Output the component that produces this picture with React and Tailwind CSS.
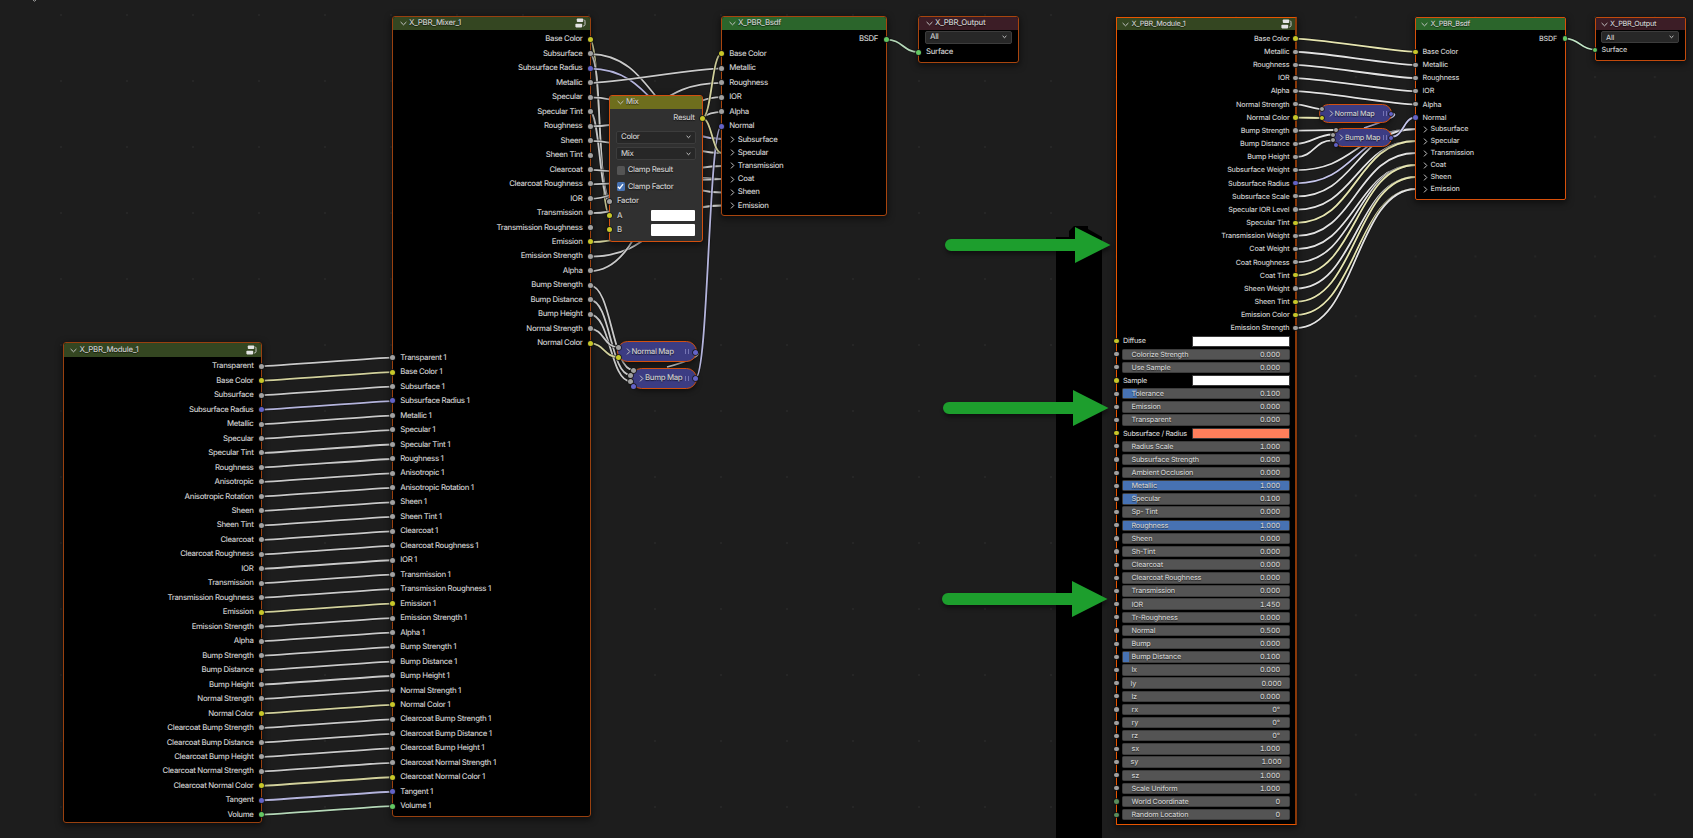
import React from "react";

const SOCKET = { g: "bg-[#a1a1a1]", y: "bg-[#c7c729]", p: "bg-[#6363c7]", s: "bg-[#63c763]", i: "bg-[#598c5c]" };
const WIRE = { g: "#c9c9c9", y: "#d2d19c", p: "#b4b4dc", s: "#b5d8b8" };
const WIRE_HI = { g: "#e3e3e3", y: "#e6e5b0", p: "#c6c6ec", s: "#c4e8c8" };

const moduleOutputs = [
  ["Transparent"], ["Base Color", "y"], ["Subsurface"], ["Subsurface Radius", "p"], ["Metallic"], ["Specular"],
  ["Specular Tint"], ["Roughness"], ["Anisotropic"], ["Anisotropic Rotation"], ["Sheen"], ["Sheen Tint"],
  ["Clearcoat"], ["Clearcoat Roughness"], ["IOR"], ["Transmission"], ["Transmission Roughness"], ["Emission", "y"],
  ["Emission Strength"], ["Alpha"], ["Bump Strength"], ["Bump Distance"], ["Bump Height"], ["Normal Strength"],
  ["Normal Color", "y"], ["Clearcoat Bump Strength"], ["Clearcoat Bump Distance"], ["Clearcoat Bump Height"],
  ["Clearcoat Normal Strength"], ["Clearcoat Normal Color", "y"], ["Tangent", "p"], ["Volume", "s"],
];

const mixerOutputs = [
  ["Base Color", "y"], ["Subsurface"], ["Subsurface Radius", "p"], ["Metallic"], ["Specular"], ["Specular Tint"],
  ["Roughness"], ["Sheen"], ["Sheen Tint"], ["Clearcoat"], ["Clearcoat Roughness"], ["IOR"], ["Transmission"],
  ["Transmission Roughness"], ["Emission", "y"], ["Emission Strength"], ["Alpha"], ["Bump Strength"],
  ["Bump Distance"], ["Bump Height"], ["Normal Strength"], ["Normal Color", "y"],
];

const bsdfInputs = [["Base Color", "y"], ["Metallic"], ["Roughness"], ["IOR"], ["Alpha"], ["Normal", "p"]];
const bsdfPanels = ["Subsurface", "Specular", "Transmission", "Coat", "Sheen", "Emission"];

const newOutputs = [
  ["Base Color", "y"], ["Metallic"], ["Roughness"], ["IOR"], ["Alpha"], ["Normal Strength"], ["Normal Color", "y"],
  ["Bump Strength"], ["Bump Distance"], ["Bump Height"], ["Subsurface Weight"], ["Subsurface Radius", "p"],
  ["Subsurface Scale"], ["Specular IOR Level"], ["Specular Tint", "y"], ["Transmission Weight"], ["Coat Weight"],
  ["Coat Roughness"], ["Coat Tint", "y"], ["Sheen Weight"], ["Sheen Tint", "y"], ["Emission Color", "y"],
  ["Emission Strength"],
];

const fields = [
  { n: "Diffuse", swatch: "bg-white" }, { n: "Colorize Strength", v: "0.000" }, { n: "Use Sample", v: "0.000" },
  { n: "Sample", swatch: "bg-white" }, { n: "Tolerance", v: "0.100", fill: 8.5 }, { n: "Emission", v: "0.000" },
  { n: "Transparent", v: "0.000" }, { n: "Subsurface / Radius", swatch: "bg-[#ff7f5b]" },
  { n: "Radius Scale", v: "1.000" }, { n: "Subsurface Strength", v: "0.000" }, { n: "Ambient Occlusion", v: "0.000" },
  { n: "Metallic", v: "1.000", fill: 100 }, { n: "Specular", v: "0.100", fill: 8.5 }, { n: "Sp- Tint", v: "0.000" },
  { n: "Roughness", v: "1.000", fill: 100 }, { n: "Sheen", v: "0.000" }, { n: "Sh-Tint", v: "0.000" },
  { n: "Clearcoat", v: "0.000" }, { n: "Clearcoat Roughness", v: "0.000" }, { n: "Transmission", v: "0.000" },
  { n: "IOR", v: "1.450" }, { n: "Tr-Roughness", v: "0.000" }, { n: "Normal", v: "0.500" }, { n: "Bump", v: "0.000" },
  { n: "Bump Distance", v: "0.100", fill: 3.8 }, { n: "lx", v: "0.000" }, { n: "ly", v: "0.000", wide: true },
  { n: "lz", v: "0.000" }, { n: "rx", v: "0°" }, { n: "ry", v: "0°" }, { n: "rz", v: "0°" }, { n: "sx", v: "1.000" },
  { n: "sy", v: "1.000", wide: true }, { n: "sz", v: "1.000" }, { n: "Scale Uniform", v: "1.000" },
  { n: "World Coordinate", v: "0", c: "i" }, { n: "Random Location", v: "0", c: "i" },
];

function curve(x1, y1, x2, y2) {
  const dx = Math.abs(x2 - x1);
  const slope = dx ? Math.abs(y2 - y1) / dx : 1;
  const h = dx * 0.5 * Math.min(1, slope * 3.25);
  return `M${x1} ${y1}C${x1 + h} ${y1} ${x2 - h} ${y2} ${x2} ${y2}`;
}

const P = 14.468;
const mixY = (i) => 39.6 + P * i;
const leftWires = [
  ...moduleOutputs.map(([, c], i) => [curve(261, 366.2 + P * i, 392.5, 357.7 + P * i), c || "g"]),
  [curve(590, mixY(0), 609.5, 215.5), "y"],
  ["M590 54C603 60 596 180 609.5 201", "g"],
  [curve(590, mixY(5), 609.5, 201.3), "g"],
  [curve(590, mixY(1), 722, 139), "g"],
  [curve(590, mixY(2), 722, 139), "p"],
  [curve(590, mixY(3), 721.5, 68.4), "g"],
  [curve(590, mixY(4), 722, 153), "g"],
  [curve(590, mixY(6), 721.5, 82.8), "g"],
  [curve(590, mixY(7), 722, 192.5), "g"],
  [curve(590, mixY(9), 722, 179), "g"],
  [curve(590, mixY(10), 722, 179), "g"],
  [curve(590, mixY(11), 721.5, 97.2), "g"],
  [curve(590, mixY(12), 722, 166), "g"],
  [curve(590, mixY(14), 722, 205.5), "y"],
  [curve(590, mixY(15), 722, 205.5), "g"],
  [curve(590, mixY(16), 721.5, 111.8), "g"],
  [curve(590, mixY(17), 633.3, 370), "g"],
  [curve(590, mixY(18), 630.5, 375), "g"],
  [curve(590, mixY(19), 630.5, 381.3), "g"],
  [curve(590, mixY(20), 618, 347.2), "g"],
  [curve(590, mixY(21), 618, 357), "y"],
  ["M695 352C704 354 690 361 667 367", "g"],
  [curve(695.5, 378, 721.5, 126.2), "p"],
  [curve(702, 118.2, 721.5, 53.8), "y"],
  [curve(702, 118.2, 722, 153), "y"],
  [curve(886.3, 39.6, 919, 52), "s"],
];

const Q = 13.156;
const newY = (i) => 38.6 + Q * i;
const rightWires = [
  [curve(1296, newY(0), 1415.5, newY(1)), "y"],
  ...[1, 2, 3, 4].map((i) => [curve(1296, newY(i), 1415.5, newY(i + 1)), "g"]),
  [curve(1296, newY(5), 1321, 109), "g"],
  [curve(1296, newY(6), 1321, 118), "y"],
  [curve(1296, newY(7), 1335, 130), "g"],
  [curve(1296, newY(8), 1332.5, 134.5), "g"],
  [curve(1296, newY(9), 1332.5, 140.3), "g"],
  [curve(1296, newY(10), 1416, 129), "g"],
  [curve(1296, newY(11), 1416, 129), "p"],
  [curve(1296, newY(12), 1416, 129), "g"],
  [curve(1296, newY(13), 1416, 141), "g"],
  [curve(1296, newY(14), 1416, 141), "y"],
  [curve(1296, newY(15), 1416, 153), "g"],
  [curve(1296, newY(16), 1416, 165), "g"],
  [curve(1296, newY(17), 1416, 165), "g"],
  [curve(1296, newY(18), 1416, 165), "y"],
  [curve(1296, newY(19), 1416, 177), "g"],
  [curve(1296, newY(20), 1416, 177), "y"],
  [curve(1296, newY(21), 1416, 189), "y"],
  [curve(1296, newY(22), 1416, 189), "g"],
  ["M1391.5 113.5C1401 114 1386 121 1364 128", "p"],
  [curve(1391.5, 137, 1415.5, 117.4), "p"],
  [curve(1565.2, 38.6, 1595, 49.6), "s"],
];

function Wires() {
  return (
    <svg className="absolute inset-0" width="1693" height="838" fill="none">
      <defs>
        <pattern id="dotsA" x="919" y="81" width="66" height="66" patternUnits="userSpaceOnUse" patternTransform="translate(-1 -1)">
          <rect width="2" height="2" fill="#262626" />
        </pattern>
        <pattern id="dotsB" x="1595" y="77" width="59.8" height="59.8" patternUnits="userSpaceOnUse" patternTransform="translate(-1 -1)">
          <rect width="2" height="2" fill="#262626" />
        </pattern>
      </defs>
      <rect width="1056" height="838" fill="url(#dotsA)" />
      <rect x="1102" width="591" height="838" fill="url(#dotsB)" />
      <path d="M33 0L34.5 1.2L36 0" stroke="#a0a0a0" strokeWidth="1" />
      <path d="M1056 838V237H1069V231L1074 226H1088V229L1102 237V838Z" fill="#000" />
      {leftWires.map(([d, c], i) => (
        <g key={i}>
          <path d={d} stroke="#0f0f0f" strokeOpacity="0.6" strokeWidth="3.2" />
          <path d={d} stroke={WIRE[c]} strokeWidth="1.8" />
        </g>
      ))}
      {rightWires.map(([d, c], i) => (
        <g key={i}>
          <path d={d} stroke="#0f0f0f" strokeOpacity="0.6" strokeWidth="3.2" />
          <path d={d} stroke={WIRE_HI[c]} strokeWidth="1.8" />
        </g>
      ))}
    </svg>
  );
}

function Arrows() {
  const list = [[945, 1075, 1110.5, 245], [943, 1073, 1108.5, 408], [942, 1072, 1107.5, 599]];
  return (
    <svg className="pointer-events-none absolute inset-0 drop-shadow-[1px_3px_2px_rgba(0,0,0,0.45)]" width="1693" height="838">
      {list.map(([a, b, c, y]) => (
        <path key={y} fill="#1d9e2d" d={`M${a + 6} ${y - 6}H${b}V${y - 18}L${c} ${y}L${b} ${y + 18}V${y + 6}H${a + 6}A6 6 0 0 1 ${a + 6} ${y - 6}Z`} />
      ))}
    </svg>
  );
}

function Dot({ c = "g", className }) {
  return <span className={"absolute rounded-full shadow-[0_0_0_0.7px_#151515] " + SOCKET[c] + " " + className} />;
}

function Chevron({ className = "", right, w = 1 }) {
  return (
    <svg className={"shrink-0 " + className} viewBox="0 0 7 7" width="7" height="7" fill="none" stroke="#c4c4c4" strokeWidth={w}>
      <path d={right ? "M2 0.6L4.8 3.5L2 6.4" : "M0.6 2L3.5 4.8L6.4 2"} />
    </svg>
  );
}

function GroupIcon({ className }) {
  return (
    <svg className={className} width="11" height="10" viewBox="0 0 11 10" fill="none">
      <rect x="1.8" y="0.4" width="6.4" height="3.6" rx="0.8" fill="#e4e4e4" />
      <rect x="0.4" y="5.8" width="6.8" height="3.6" rx="0.8" fill="#e4e4e4" />
      <path d="M8.8 1.8C9.8 2 10 2.6 10 3.4V6.4C10 7.4 9.4 8 8.2 8" stroke="#c9c9c9" strokeWidth="1" />
    </svg>
  );
}

function Node({ box, header, title, group, children, small }) {
  return (
    <section className={"absolute flex flex-col bg-black shadow-[0_2px_6px_1px_rgba(0,0,0,0.5)] " + box}>
      <header className={"flex shrink-0 items-center overflow-hidden " + (small ? "h-[12px] pl-[5px] pr-[3px] " : "h-[13.6px] rounded-t-[2px] pl-[6.5px] pr-[4px] ") + header}>
        <Chevron className="mr-[2.5px]" />
        <span className="grow tracking-[-0.24px]">{title}</span>
        {group && <GroupIcon className="shrink-0" />}
      </header>
      {children}
    </section>
  );
}

function Out({ row, name, c, dot, pad }) {
  return (
    <div className={"relative flex shrink-0 items-center justify-end " + row + " " + pad}>
      {name}
      <Dot c={c} className={dot} />
    </div>
  );
}

function In({ row, name, c, dot, pad }) {
  return (
    <div className={"relative flex shrink-0 items-center " + row + " " + pad}>
      {name}
      <Dot c={c} className={dot} />
    </div>
  );
}

function Select({ label, className }) {
  return (
    <div className={"flex shrink-0 items-center justify-between rounded-[2px] border border-[#3c3c3c] bg-[#272727] " + className}>
      <span>{label}</span>
      <svg width="5" height="4" viewBox="0 0 5 4" fill="none" stroke="#c8c8c8" strokeWidth="1">
        <path d="M0.6 0.9L2.5 2.7L4.4 0.9" />
      </svg>
    </div>
  );
}

const LO = "right-[-2.8px] top-[4.7px] size-[5px]";
const LI = "left-[-2.6px] top-[4.7px] size-[5px]";
const RO = "right-[-2.6px] top-[4.5px] size-[4.2px]";
const RI = "left-[-2.6px] top-[4.5px] size-[4.2px]";

function MapNode({ box, name, dots, pad }) {
  return (
    <div className={"absolute flex items-center rounded-full border border-[#d2500f] bg-[#3c3c83] shadow-[0_2px_5px_rgba(0,0,0,0.5)] " + box + " " + pad}>
      <Chevron right />
      <span className="grow whitespace-nowrap">{name}</span>
      <span className="h-[5px] w-[4px] shrink-0 border-x border-[#7474b4]" />
      {dots.map(([c, cls], i) => <Dot key={i} c={c} className={cls} />)}
    </div>
  );
}

function Field({ f }) {
  return (
    <div className="relative flex h-[13.17px] shrink-0 items-center pl-[5px] pr-[5.5px]">
      <Dot c={f.swatch ? "y" : f.c || "g"} className={RI} />
      {f.swatch ? (
        <>
          <span className="grow pl-[1px] tracking-[-0.28px]">{f.n}</span>
          <span className={"h-[11px] w-[97.5px] rounded-[1px] border border-[#3a3a3a] " + f.swatch} />
        </>
      ) : (
        <div className={"relative flex h-[11.4px] grow items-center justify-between overflow-hidden rounded-[1.5px] border border-[#3d3d3d] bg-[#545454] " + (f.wide ? "pl-[7.5px] pr-[7px]" : "px-[8.5px]")}>
          {f.fill && <span className="absolute inset-y-0 left-0 bg-[#4772b3]" style={{ width: f.fill + "%" }} />}
          <span className="relative">{f.n}</span>
          <span className="relative tabular-nums tracking-[-0.1px]">{f.v}</span>
        </div>
      )}
    </div>
  );
}

export default function App() {
  return (
    <main className="relative h-[838px] w-[1693px] overflow-hidden whitespace-nowrap bg-[#1d1d1d] font-['Inter',sans-serif] text-[7.8px] font-medium leading-none tracking-[-0.33px] text-[#cccccc] [text-rendering:geometricPrecision] [text-shadow:0_1px_1px_rgba(0,0,0,0.6)]">
      <Wires />

      <Node box="left-[62.5px] top-[342.4px] h-[480.4px] w-[199.5px] rounded-[3px] border border-[#98400f]" header="bg-[#344621]" title="X_PBR_Module_1" group>
        <div className="flex flex-col pt-[2px]">
          {moduleOutputs.map(([n, c]) => <Out key={n} row="h-[14.47px]" pad="pr-[7.5px]" name={n} c={c} dot={LO} />)}
        </div>
      </Node>

      <Node box="left-[392px] top-[15.6px] h-[801.7px] w-[199px] rounded-[3px] border border-[#98400f]" header="bg-[#344621]" title="X_PBR_Mixer_1" group>
        <div className="flex flex-col pt-[1.9px]">
          {mixerOutputs.map(([n, c]) => <Out key={n} row="h-[14.47px]" pad="pr-[7.5px]" name={n} c={c} dot={LO} />)}
          {moduleOutputs.map(([n, c]) => <In key={n} row="h-[14.47px]" pad="pl-[7.2px]" name={n + " 1"} c={c} dot={LI} />)}
        </div>
      </Node>

      <Node box="left-[721px] top-[15.6px] h-[200.8px] w-[166px] rounded-[3px] border border-[#a8450e]" header="bg-[#2b652b]" title="X_PBR_Bsdf">
        <div className="flex flex-col pt-[1.9px]">
          <Out row="h-[14.47px]" pad="pr-[8px]" name="BSDF" c="s" dot={LO} />
          {bsdfInputs.map(([n, c]) => <In key={n} row="h-[14.47px]" pad="pl-[7.2px]" name={n} c={c} dot={LI} />)}
          <div className="-mt-[0.4px] flex flex-col">
            {bsdfPanels.map((n) => (
              <div key={n} className="flex h-[13.2px] shrink-0 items-center gap-[2.3px] pl-[6.5px]">
                <Chevron right /><span>{n}</span>
              </div>
            ))}
          </div>
        </div>
      </Node>

      <Node box="left-[918px] top-[15.6px] h-[47.8px] w-[101px] rounded-[3px] border border-[#a8450e]" header="bg-[#3c1d26]" title="X_PBR_Output">
        <Select label="All" className="mx-[6px] mt-[0.4px] h-[13.4px] px-[4px]" />
        <In row="h-[14.47px] mt-[0.9px]" pad="pl-[7px]" name="Surface" c="s" dot={LI} />
      </Node>

      <Node box="left-[609px] top-[94.5px] h-[147.4px] w-[94px] rounded-[3px] border border-[#d2500f] !bg-[#303030]" header="bg-[#6e6e1d]" title="Mix">
        <div className="flex flex-col pt-[2px]">
          <Out row="h-[14.47px]" pad="pr-[7.5px]" name="Result" c="y" dot={LO} />
          <Select label="Color" className="mx-[6px] mt-[5.2px] h-[13px] px-[4px]" />
          <Select label="Mix" className="mx-[6px] mt-[3.5px] h-[13px] px-[4px]" />
          <div className="mt-[4px] flex h-[12px] items-center gap-[2.7px] pl-[6.5px]">
            <span className="size-[8.5px] rounded-[1.5px] bg-[#545454]" />Clamp Result
          </div>
          <div className="mt-[4.2px] flex h-[12px] items-center gap-[2.7px] pl-[6.5px]">
            <span className="flex size-[8.5px] items-center justify-center rounded-[1.5px] bg-[#4772b3]">
              <svg width="7" height="7" viewBox="0 0 7 7" fill="none" stroke="#fff" strokeWidth="1.3"><path d="M0.9 3.7L2.7 5.5L6 1.2" /></svg>
            </span>
            Clamp Factor
          </div>
          <In row="h-[14.47px] mt-[1.4px]" pad="pl-[7px]" name="Factor" dot={LI} />
          {["A", "B"].map((n) => (
            <div key={n} className="relative flex h-[14.47px] items-center justify-between pl-[7px] pr-[7px]">
              {n}<span className="h-[11.6px] w-[44px] rounded-[1px] bg-white" />
              <Dot c="y" className={LI} />
            </div>
          ))}
        </div>
      </Node>

      <MapNode box="left-[616.5px] top-[341px] h-[21px] w-[80px]" pad="pl-[7px] pr-[6.5px]" name="Normal Map" dots={[["g", "left-[-2px] top-[2.7px] size-[5px]"], ["y", "left-[-2px] top-[12.8px] size-[5px]"], ["p", "right-[-2px] top-[7.5px] size-[5px]"]]} />
      <MapNode box="left-[631px] top-[367.5px] h-[21px] w-[65.5px]" pad="pl-[6px] pr-[6.5px]" name="Bump Map" dots={[["g", "left-[-1.5px] top-[-0.8px] size-[5px]"], ["g", "left-[-4.2px] top-[4.2px] size-[5px]"], ["g", "left-[-4.2px] top-[10.5px] size-[5px]"], ["p", "left-[-1.2px] top-[15px] size-[5px]"], ["p", "right-[-2px] top-[7.5px] size-[5px]"]]} />

      <div className="text-[7.2px] tracking-[-0.19px]">
        <Node small box="left-[1116px] top-[17px] h-[808px] w-[181px] rounded-[1px] border border-r-2 border-[#e85500] border-r-[#8a3808]" header="bg-[#344621]" title="X_PBR_Module_1" group>
          <div className="flex flex-col pt-[1.9px]">
            {newOutputs.map(([n, c]) => <Out key={n} row="h-[13.17px]" pad="pr-[5.5px]" name={n} c={c} dot={RO} />)}
            {fields.map((f) => <Field key={f.n + f.v} f={f} />)}
          </div>
        </Node>

        <Node small box="left-[1415px] top-[17px] h-[182.5px] w-[151px] rounded-[2px] border border-[#d8500a]" header="bg-[#2b652b]" title="X_PBR_Bsdf">
          <div className="flex flex-col pt-[1.9px]">
            <Out row="h-[13.17px]" pad="pr-[8px]" name="BSDF" c="s" dot="right-[-2px] top-[4.5px] size-[4.2px]" />
            {bsdfInputs.map(([n, c]) => <In key={n} row="h-[13.17px]" pad="pl-[6.6px]" name={n} c={c} dot={RI} />)}
            <div className="-mt-[0.9px] flex flex-col">
              {bsdfPanels.map((n) => (
                <div key={n} className="flex h-[12px] shrink-0 items-center gap-[2px] pl-[5.5px]">
                  <Chevron right /><span>{n}</span>
                </div>
              ))}
            </div>
          </div>
        </Node>

        <Node small box="left-[1594.5px] top-[17px] h-[44px] w-[91px] rounded-[2px] border border-[#c24a0c]" header="bg-[#3c1d26]" title="X_PBR_Output">
          <Select label="All" className="mx-[5.5px] mt-[1.2px] h-[12px] px-[4px]" />
          <In row="h-[13.17px]" pad="pl-[6px]" name="Surface" c="s" dot={RI} />
        </Node>

        <MapNode box="left-[1319px] top-[104px] h-[19px] w-[73px]" pad="pl-[7.5px] pr-[4px]" name="Normal Map" dots={[["g", "left-[-0.5px] top-[2px] size-[4.2px]"], ["y", "left-[-0.5px] top-[11px] size-[4.2px]"], ["p", "right-[-2px] top-[6.5px] size-[4.2px]"]]} />
        <MapNode box="left-[1333px] top-[128px] h-[19px] w-[59px]" pad="pl-[4px] pr-[4px]" name="Bump Map" dots={[["g", "left-[-0.5px] top-[-1px] size-[4.2px]"], ["g", "left-[-3.5px] top-[3.5px] size-[4.2px]"], ["g", "left-[-3.5px] top-[9.2px] size-[4.2px]"], ["p", "left-[-0.5px] top-[13.5px] size-[4.2px]"], ["p", "right-[-2px] top-[6.5px] size-[4.2px]"]]} />
      </div>

      <Arrows />
    </main>
  );
}
